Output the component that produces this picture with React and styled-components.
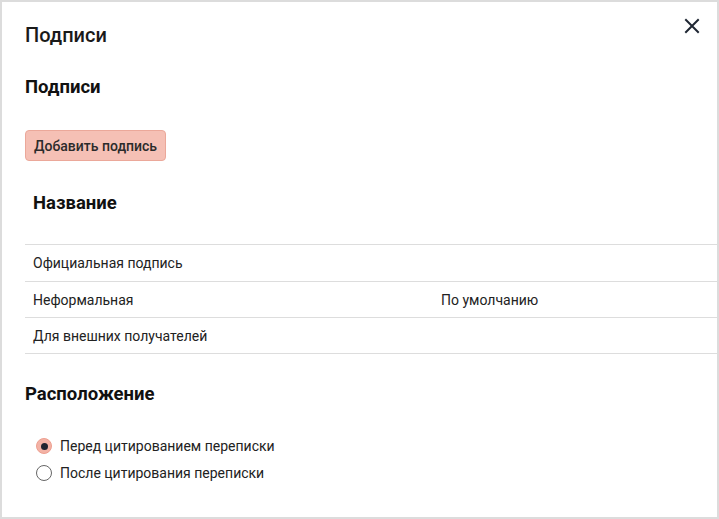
import React from "react";
import styled, { createGlobalStyle } from "styled-components";

const Global = createGlobalStyle`
  html, body { margin: 0; padding: 0; background: #fff; }
  body { font-family: Roboto, "Noto Sans", Arial, sans-serif; color: #222; }
  * { box-sizing: border-box; }
`;

const Frame = styled.div`
  width: 719px;
  height: 519px;
  border: 2px solid #dcdcdc;
  position: relative;
  padding: 0 0 0 23px;
  overflow: hidden;
`;

const Title = styled.h1`
  margin: 0;
  padding-top: 21px;
  height: 74px;
  line-height: 24px;
  font-size: 20px;
  font-weight: 500;
  color: #1a1a1a;
`;

const CloseButton = styled.button`
  position: absolute;
  top: 13px;
  right: 14px;
  width: 22px;
  height: 22px;
  padding: 0;
  border: none;
  background: transparent;
  display: flex;
  align-items: center;
  justify-content: center;
  cursor: pointer;
`;

const SectionTitle = styled.h2`
  margin: 0;
  font-size: 18.5px;
  font-weight: 700;
  line-height: 22px;
  color: #111;
  margin-top: ${(p) => p.$top || 0}px;
`;

const AddButton = styled.button`
  margin-top: 32px;
  height: 31px;
  padding: 0 8px;
  background: #f5c0b5;
  border: 1px solid #eba89a;
  border-radius: 4px;
  font-family: inherit;
  font-size: 14px;
  font-weight: 500;
  color: #2b2b2b;
  cursor: pointer;
`;

const Table = styled.div`
  margin-top: 21px;
  width: 694px;
`;

const HeaderRow = styled.div`
  height: 63px;
  padding: 10px 8px 0;
  border-bottom: 1px solid #dddddd;
`;

const HeaderText = styled.div`
  font-size: 18.5px;
  font-weight: 700;
  line-height: 22px;
  color: #111;
`;

const Row = styled.div`
  display: grid;
  grid-template-columns: 408px 1fr;
  height: ${(p) => p.$h || 36}px;
  align-items: center;
  border-bottom: 1px solid #dddddd;
`;

const Cell = styled.div`
  padding: 0 8px;
  font-size: 14px;
  color: #222;
`;

const RadioGroup = styled.div`
  margin-top: 32px;
  display: flex;
  flex-direction: column;
  gap: 9px;
  padding-left: 11px;
`;

const RadioLabel = styled.label`
  display: flex;
  align-items: center;
  gap: 8px;
  font-size: 14px;
  color: #222;
  height: 18px;
  cursor: pointer;
`;

const RadioDot = styled.span`
  width: 16px;
  height: 16px;
  border-radius: 50%;
  flex: none;
  display: flex;
  align-items: center;
  justify-content: center;
  background: ${(p) => (p.$checked ? "#f3b3a6" : "#fff")};
  border: ${(p) => (p.$checked ? "1.5px solid #ee9f90" : "1.5px solid #666")};
  &::after {
    content: "";
    width: 7px;
    height: 7px;
    border-radius: 50%;
    background: #1f2430;
    display: ${(p) => (p.$checked ? "block" : "none")};
  }
`;

const rows = [
  { name: "Официальная подпись", extra: "", h: 37 },
  { name: "Неформальная", extra: "По умолчанию", h: 36 },
  { name: "Для внешних получателей", extra: "", h: 36 },
];

export default function App() {
  return (
    <>
      <Global />
      <Frame>
        <Title>Подписи</Title>
        <CloseButton aria-label="Закрыть">
          <svg width="16" height="16" viewBox="0 0 16 16">
            <path d="M2 2 L14 14 M14 2 L2 14" stroke="#1f2733" strokeWidth="2" strokeLinecap="square" />
          </svg>
        </CloseButton>
        <SectionTitle>Подписи</SectionTitle>
        <AddButton>Добавить подпись</AddButton>
        <Table>
          <HeaderRow>
            <HeaderText>Название</HeaderText>
          </HeaderRow>
          {rows.map((r) => (
            <Row key={r.name} $h={r.h}>
              <Cell>{r.name}</Cell>
              <Cell>{r.extra}</Cell>
            </Row>
          ))}
        </Table>
        <SectionTitle $top={29}>Расположение</SectionTitle>
        <RadioGroup>
          <RadioLabel>
            <RadioDot $checked />
            Перед цитированием переписки
          </RadioLabel>
          <RadioLabel>
            <RadioDot />
            После цитирования переписки
          </RadioLabel>
        </RadioGroup>
      </Frame>
    </>
  );
}
